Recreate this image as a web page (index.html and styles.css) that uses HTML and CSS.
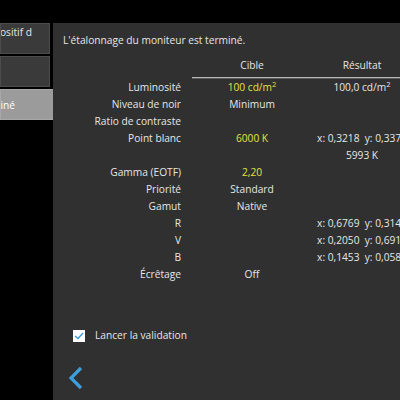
FILE: index.html
```html
<!DOCTYPE html>
<html lang="fr">
<head>
<meta charset="utf-8">
<link rel="stylesheet" href="styles.css">
</head>
<body>
<div class="app">
  <nav class="sidebar">
    <div class="step step-top"><span class="step-text">Dispositif d</span></div>
    <div class="step"></div>
    <div class="step step-active"><span class="step-text">Terminé</span></div>
  </nav>
  <main class="panel">
    <p class="intro">L'étalonnage du moniteur est terminé.</p>
    <div class="results">
      <div class="row head">
        <div class="lbl"></div>
        <div class="tgt"><span>Cible</span></div>
        <div class="res"><span>Résultat</span></div>
      </div>
      <div class="rule"></div>
      <div class="row"><div class="lbl">Luminosité</div><div class="tgt yellow"><span>100 cd/m<sup>2</sup></span></div><div class="res"><span>100,0 cd/m<sup>2</sup></span></div></div>
      <div class="row"><div class="lbl">Niveau de noir</div><div class="tgt"><span>Minimum</span></div><div class="res"></div></div>
      <div class="row"><div class="lbl">Ratio de contraste</div><div class="tgt"></div><div class="res"></div></div>
      <div class="row"><div class="lbl">Point blanc</div><div class="tgt yellow"><span>6000 K</span></div><div class="res"><span>x: 0,3218&nbsp;&nbsp;y: 0,3372</span></div></div>
      <div class="row"><div class="lbl"></div><div class="tgt"></div><div class="res"><span>5993 K</span></div></div>
      <div class="row"><div class="lbl">Gamma (EOTF)</div><div class="tgt yellow"><span>2,20</span></div><div class="res"></div></div>
      <div class="row"><div class="lbl">Priorité</div><div class="tgt"><span>Standard</span></div><div class="res"></div></div>
      <div class="row"><div class="lbl">Gamut</div><div class="tgt"><span>Native</span></div><div class="res"></div></div>
      <div class="row"><div class="lbl">R</div><div class="tgt"></div><div class="res"><span>x: 0,6769&nbsp;&nbsp;y: 0,3146</span></div></div>
      <div class="row"><div class="lbl">V</div><div class="tgt"></div><div class="res"><span>x: 0,2050&nbsp;&nbsp;y: 0,6912</span></div></div>
      <div class="row"><div class="lbl">B</div><div class="tgt"></div><div class="res"><span>x: 0,1453&nbsp;&nbsp;y: 0,0584</span></div></div>
      <div class="row"><div class="lbl">Écrêtage</div><div class="tgt"><span>Off</span></div><div class="res"></div></div>
    </div>
    <label class="check">
      <span class="box"><svg width="10" height="8" viewBox="0 0 10 8"><path d="M1 4 L4 6.5 L9 1" fill="none" stroke="#3a9ad9" stroke-width="1.4"/></svg></span>
      <span>Lancer la validation</span>
    </label>
    <div class="back">
      <svg width="16" height="24" viewBox="0 0 16 24"><path d="M13 2 L3 12 L13 22" fill="none" stroke="#3d9fdc" stroke-width="3.2"/></svg>
    </div>
  </main>
</div>
</body>
</html>
```
FILE: styles.css
```css
html, body {
  margin: 0;
  padding: 0;
  background: #000;
  overflow: hidden;
}
body {
  width: 400px;
  height: 400px;
  font-family: "Open Sans", "Noto Sans", sans-serif;
  font-size: 10.2px;
  color: #e6e6e6;
}
.app {
  display: flex;
  padding-top: 23px;
  height: 377px;
}
.sidebar {
  width: 53px;
  display: flex;
  flex-direction: column;
  gap: 2px;
  flex-shrink: 0;
  overflow: hidden;
}
.step {
  width: 48px;
  height: 29px;
  background: #3a3a3a;
  border: 1px solid #4c4c4c;
  display: flex;
  align-items: center;
  justify-content: flex-end;
  overflow: hidden;
  white-space: nowrap;
}
.step-top {
  align-items: flex-start;
}
.step-top .step-text {
  padding-right: 17px;
  padding-top: 1px;
}
.step-active {
  width: 52px;
  background: #9b9b9b;
  border-color: #a8a8a8;
  color: #fff;
}
.step-active .step-text {
  padding-right: 38px;
}
.panel {
  flex: 1;
  background: #303030;
  padding: 9px 0 0 10px;
  display: flex;
  flex-direction: column;
  overflow: hidden;
  min-width: 0;
}
.intro {
  margin: 0 0 8px 0;
  line-height: 17px;
  white-space: nowrap;
}
.results {
  display: flex;
  flex-direction: column;
  white-space: nowrap;
}
.row {
  display: grid;
  grid-template-columns: 118px 11px 120px 100px;
  height: 17px;
  line-height: 17px;
}
.lbl {
  grid-column: 1;
  text-align: right;
}
.tgt, .res {
  display: flex;
  justify-content: center;
}
.tgt { grid-column: 3; }
.res { grid-column: 4; }
.rule {
  margin: 3px 0 0 129px;
  height: 0;
  border-top: 1px solid #b8b8b8;
  border-bottom: 1px solid #5a5a5a;
}
.yellow { color: #e4e23e; }
sup {
  font-size: 7.5px;
  position: relative;
  top: -4px;
  vertical-align: baseline;
  line-height: 0;
}
.check {
  display: flex;
  align-items: center;
  gap: 10px;
  margin: 44px 0 0 10px;
  line-height: 17px;
}
.box {
  width: 12px;
  height: 12px;
  background: #fff;
  display: flex;
  align-items: center;
  justify-content: center;
}
.back {
  margin: 22px 0 0 5px;
  height: 24px;
}
```
